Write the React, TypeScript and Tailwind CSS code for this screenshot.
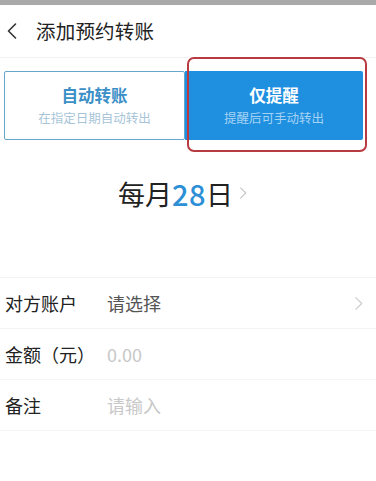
import React from "react";

const font = { fontFamily: '"Noto Sans CJK SC", "Noto Sans", sans-serif' };

function Chevron({ className, stroke, w = 1.6 }: { className: string; stroke: string; w?: number }) {
  return (
    <svg viewBox="0 0 10 16" className={className} fill="none">
      <path d="M2 1.5 L8.5 8 L2 14.5" stroke={stroke} strokeWidth={w} strokeLinecap="round" strokeLinejoin="round" />
    </svg>
  );
}

export default function App() {
  return (
    <div className="w-[376px] h-[481px] bg-white overflow-hidden" style={font}>
      <div className="h-[5px] bg-[#a9a9a9]" />
      <div className="h-[53px] flex items-center border-b border-[#f1f1f1]">
        <svg viewBox="0 0 10 16" className="ml-[7px] w-[10px] h-[16px]" fill="none">
          <path d="M8.5 1 L1.5 8 L8.5 15" stroke="#333" strokeWidth={1.6} strokeLinecap="round" strokeLinejoin="round" />
        </svg>
        <div className="ml-[19px] text-[19.5px] leading-none text-[#222] tracking-[0.2px]">添加预约转账</div>
      </div>

      <div className="mt-[13px] pl-[4px] flex h-[69px]">
        <div className="w-[181px] border border-[#67a6cb] rounded-[2px] flex flex-col items-center justify-center">
          <div className="text-[16.5px] leading-none font-bold text-[#3a8fc6]">自动转账</div>
          <div className="mt-[8px] text-[12.5px] leading-none text-[#a8c5d8]">在指定日期自动转出</div>
        </div>
        <div className="relative w-[178px] bg-[#1f8fe0] rounded-r-[2px] flex flex-col items-center justify-center">
          <div className="text-[16.5px] leading-none font-bold text-white">仅提醒</div>
          <div className="mt-[8px] text-[12.5px] leading-none text-[#a6d3f4]">提醒后可手动转出</div>
          <div className="absolute left-[2px] -right-[4px] -top-[14px] -bottom-[12px] border-2 border-[#b83b42] rounded-[7px]" />
        </div>
      </div>

      <div className="h-[137px] pt-[37px] pl-[118px] flex">
        <div className="flex items-center h-[32px]">
          <span className="text-[27px] leading-none text-[#222]">每月</span>
          <span className="text-[29px] leading-none text-[#2d8fd5] font-medium tracking-[0.5px]">28</span>
          <span className="text-[27px] leading-none text-[#222]">日</span>
          <Chevron className="ml-[6px] w-[8px] h-[14px]" stroke="#c8c8c8" w={1.4} />
        </div>
      </div>

      <div className="border-t border-[#f4f4f4]">
        <div className="h-[51px] flex items-center border-b border-[#f4f4f4]">
          <div className="w-[107px] pl-[5px] text-[18px] leading-none text-[#222]">对方账户</div>
          <div className="flex-1 text-[18px] leading-none text-[#555]">请选择</div>
          <Chevron className="mr-[13px] w-[9px] h-[15px]" stroke="#cccccc" w={1.3} />
        </div>
        <div className="h-[51px] flex items-center border-b border-[#f5f5f5]">
          <div className="w-[107px] pl-[5px] text-[18px] leading-none text-[#222] whitespace-nowrap">金额（元）</div>
          <div className="flex-1 text-[18px] leading-none text-[#c8c8c8]">0.00</div>
        </div>
        <div className="h-[51px] flex items-center border-b border-[#f6f6f6]">
          <div className="w-[107px] pl-[5px] text-[18px] leading-none text-[#222]">备注</div>
          <div className="flex-1 text-[18px] leading-none text-[#c8c8c8]">请输入</div>
        </div>
      </div>
    </div>
  );
}
